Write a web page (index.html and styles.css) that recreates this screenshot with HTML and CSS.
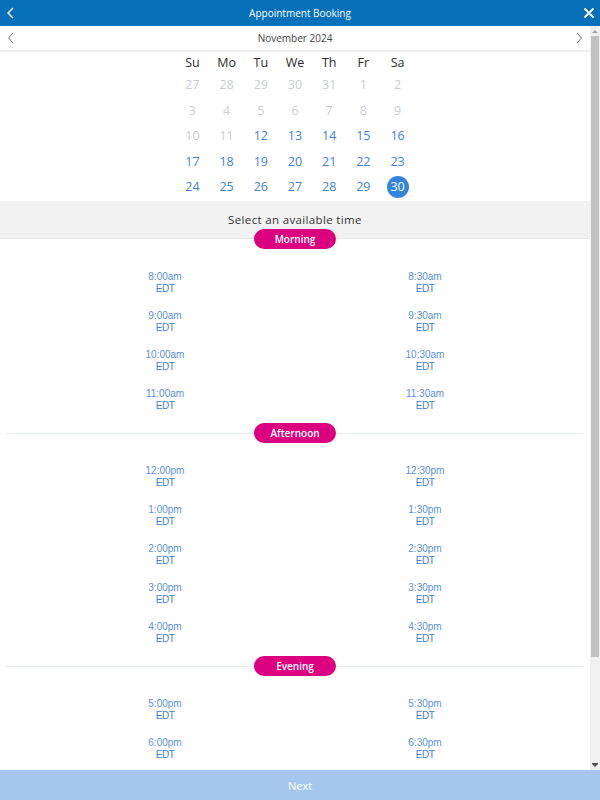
FILE: index.html
```html
<!DOCTYPE html>
<html lang="en">
  <head>
    <meta charset="UTF-8" />
    <meta name="viewport" content="width=device-width, initial-scale=1.0" />
    <title>Appointment Booking</title>
    <link rel="stylesheet" href="styles.css">
  </head>
  <body>
    <header class="topbar">
      <button class="icon-btn" aria-label="Back">
        <svg width="10" height="12" viewBox="0 0 10 12"><path d="M7 1 L2 6 L7 11" fill="none" stroke="#fff" stroke-width="1.4"/></svg>
      </button>
      <h1>Appointment Booking</h1>
      <button class="icon-btn" aria-label="Close">
        <svg width="12" height="12" viewBox="0 0 12 12"><path d="M1.5 1.5 L10.5 10.5 M10.5 1.5 L1.5 10.5" fill="none" stroke="#fff" stroke-width="1.8"/></svg>
      </button>
    </header>

    <div class="body-row">
      <main class="scroller">
        <div class="month-bar">
          <button class="icon-btn" aria-label="Previous month">
            <svg width="8" height="12" viewBox="0 0 8 12"><path d="M6 1 L1.5 6 L6 11" fill="none" stroke="#777" stroke-width="1"/></svg>
          </button>
          <span>November 2024</span>
          <button class="icon-btn" aria-label="Next month">
            <svg width="8" height="12" viewBox="0 0 8 12"><path d="M2 1 L6.5 6 L2 11" fill="none" stroke="#777" stroke-width="1"/></svg>
          </button>
        </div>

        <div class="calendar">
          <div class="dow">Su</div><div class="dow">Mo</div><div class="dow">Tu</div><div class="dow">We</div><div class="dow">Th</div><div class="dow">Fr</div><div class="dow">Sa</div>
          <div class="day off">27</div><div class="day off">28</div><div class="day off">29</div><div class="day off">30</div><div class="day off">31</div><div class="day off">1</div><div class="day off">2</div>
          <div class="day off">3</div><div class="day off">4</div><div class="day off">5</div><div class="day off">6</div><div class="day off">7</div><div class="day off">8</div><div class="day off">9</div>
          <div class="day off">10</div><div class="day off">11</div><div class="day">12</div><div class="day">13</div><div class="day">14</div><div class="day">15</div><div class="day">16</div>
          <div class="day">17</div><div class="day">18</div><div class="day">19</div><div class="day">20</div><div class="day">21</div><div class="day">22</div><div class="day">23</div>
          <div class="day">24</div><div class="day">25</div><div class="day">26</div><div class="day">27</div><div class="day">28</div><div class="day">29</div><div class="day"><span class="selected">30</span></div>
        </div>

        <div class="time-band">Select an available time</div>

        <div class="period first"><span class="pill">Morning</span></div>
        <div class="slots">
          <a class="slot">8:00am<span>EDT</span></a><a class="slot">8:30am<span>EDT</span></a>
          <a class="slot">9:00am<span>EDT</span></a><a class="slot">9:30am<span>EDT</span></a>
          <a class="slot">10:00am<span>EDT</span></a><a class="slot">10:30am<span>EDT</span></a>
          <a class="slot">11:00am<span>EDT</span></a><a class="slot">11:30am<span>EDT</span></a>
        </div>

        <div class="period"><span class="pill">Afternoon</span></div>
        <div class="slots">
          <a class="slot">12:00pm<span>EDT</span></a><a class="slot">12:30pm<span>EDT</span></a>
          <a class="slot">1:00pm<span>EDT</span></a><a class="slot">1:30pm<span>EDT</span></a>
          <a class="slot">2:00pm<span>EDT</span></a><a class="slot">2:30pm<span>EDT</span></a>
          <a class="slot">3:00pm<span>EDT</span></a><a class="slot">3:30pm<span>EDT</span></a>
          <a class="slot">4:00pm<span>EDT</span></a><a class="slot">4:30pm<span>EDT</span></a>
        </div>

        <div class="period"><span class="pill">Evening</span></div>
        <div class="slots">
          <a class="slot">5:00pm<span>EDT</span></a><a class="slot">5:30pm<span>EDT</span></a>
          <a class="slot">6:00pm<span>EDT</span></a><a class="slot">6:30pm<span>EDT</span></a>
        </div>
      </main>

      <!-- drawn scrollbar -->
      <aside class="scrollbar">
        <div class="sb-btn">
          <svg width="6" height="4" viewBox="0 0 6 4"><path d="M0 4 L3 1 L6 4 Z" fill="#a3a3a3"/></svg>
        </div>
        <div class="sb-thumb"></div>
        <div class="sb-track"></div>
        <div class="sb-btn">
          <svg width="6" height="4" viewBox="0 0 6 4"><path d="M0 0 L6 0 L6 1 L3 4 L0 1 Z" fill="#505050"/></svg>
        </div>
      </aside>
    </div>

    <footer class="next-bar">
      <button class="next-btn" disabled>Next</button>
    </footer>
  </body>
</html>
```

FILE: styles.css
```css
* {
  padding: 0;
  margin: 0;
  box-sizing: border-box;
}

html,
body {
  height: 100%;
}

body {
  font-family: "Open Sans", "Liberation Sans", Arial, sans-serif;
  background-color: #fff;
  display: flex;
  flex-direction: column;
  overflow: hidden;
}

.icon-btn {
  background: none;
  border: none;
  display: flex;
  align-items: center;
  justify-content: center;
  cursor: pointer;
}

/* top bar */
.topbar {
  height: 26px;
  flex: none;
  background-color: #0670b9;
  display: flex;
  align-items: center;
  justify-content: space-between;
  padding: 0 3px 0 3px;
}

.topbar h1 {
  font-size: 10px;
  font-weight: 400;
  color: #fff;
}

.topbar .icon-btn {
  width: 16px;
  height: 16px;
}

/* scroll area + scrollbar */
.body-row {
  flex: 1;
  min-height: 0;
  display: flex;
}

.scroller {
  flex: 1;
  overflow: hidden;
}

.scrollbar {
  width: 10px;
  flex: none;
  background-color: #f0f0f0;
  display: flex;
  flex-direction: column;
}

.sb-btn {
  height: 10px;
  flex: none;
  display: flex;
  align-items: center;
  justify-content: center;
}

.sb-thumb {
  height: 621px;
  flex: none;
  margin: 0 1px;
  background-color: #c1c1c1;
}

.sb-track {
  flex: 1;
}

.month-bar {
  height: 26px;
  border-bottom: 2px solid #eef0f0;
  display: flex;
  align-items: center;
  justify-content: space-between;
  padding: 0 6px;
  font-size: 10px;
  color: #444;
}

.month-bar .icon-btn {
  width: 10px;
  height: 14px;
}

/* calendar */
.calendar {
  display: grid;
  grid-template-columns: repeat(7, 34.2px);
  grid-template-rows: 20px repeat(5, 25.5px);
  justify-content: center;
  padding-bottom: 1.5px;
  font-size: 12.5px;
}

.dow,
.day {
  display: flex;
  align-items: center;
  justify-content: center;
}

.dow {
  color: #2a2a2a;
}

.day {
  color: #3e82d8;
}

.day.off {
  color: #c9cdd0;
}

.selected {
  width: 22px;
  height: 22px;
  border-radius: 50%;
  background-color: #3286df;
  color: #fff;
  display: flex;
  align-items: center;
  justify-content: center;
}

/* time list */
.time-band {
  height: 38px;
  background-color: #f2f2f2;
  border-bottom: 1px solid #e6e6e6;
  display: flex;
  align-items: center;
  justify-content: center;
  font-size: 11.5px;
  letter-spacing: 0.35px;
  color: #333;
}

.period {
  height: 20px;
  margin: 0 6px;
  display: flex;
  align-items: center;
  justify-content: center;
  background-image: linear-gradient(#e4e9e9, #e4e9e9);
  background-size: 100% 1px;
  background-position: center 10px;
  background-repeat: no-repeat;
}

.period.first {
  margin-top: -10px;
  background-image: none;
}

.pill {
  width: 82px;
  height: 20px;
  border-radius: 10px;
  background-color: #db0080;
  color: #fff;
  font-size: 10px;
  font-weight: 600;
  display: flex;
  align-items: center;
  justify-content: center;
}

.slots {
  display: grid;
  grid-template-columns: 1fr 1fr;
  grid-auto-rows: 39px;
  padding: 14px 35px 4px;
}

.slot {
  display: flex;
  flex-direction: column;
  align-items: center;
  justify-content: center;
  font-family: "Liberation Sans", Arial, sans-serif;
  font-size: 10px;
  line-height: 12px;
  color: #5a90da;
  cursor: pointer;
}

.slot span {
  color: #3c7ed5;
  letter-spacing: -0.5px;
}

/* footer */
.next-bar {
  height: 30px;
  flex: none;
}

.next-btn {
  width: 100%;
  height: 100%;
  border: none;
  background-color: #a5c7ee;
  color: #fff;
  font-family: "Open Sans", "Liberation Sans", Arial, sans-serif;
  font-size: 11px;
}
```
